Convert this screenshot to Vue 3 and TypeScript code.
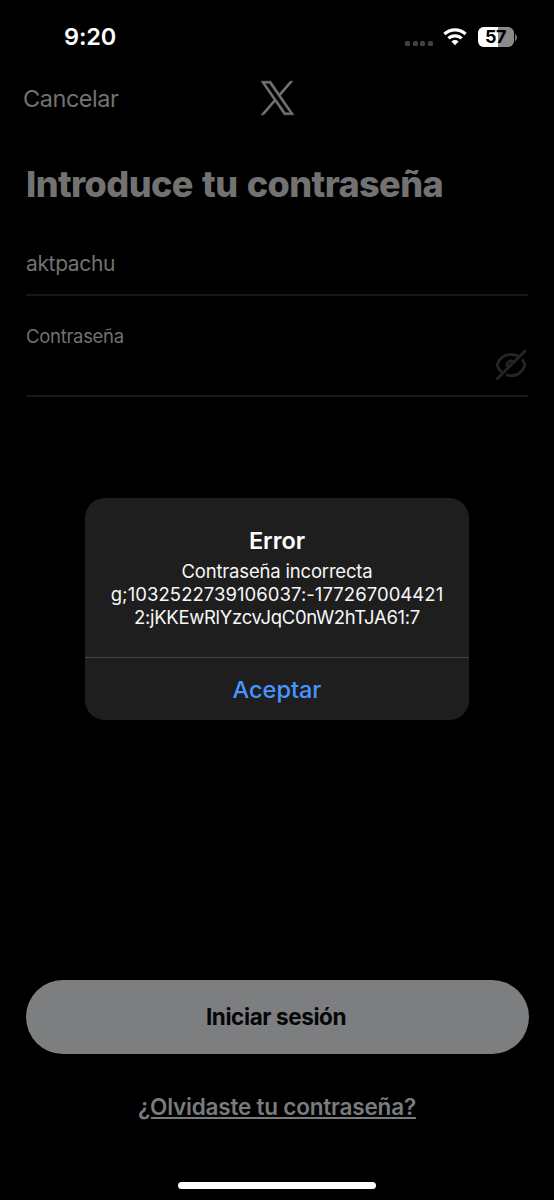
<script setup lang="ts">
import { ref } from 'vue'

const time = '9:20'
const battery = 57
const username = ref('aktpachu')
const message: string[] = [
  'Contraseña incorrecta',
  'g;1032522739106037:-177267004421',
  '2:jKKEwRlYzcvJqC0nW2hTJA61:7',
]
</script>

<template>
  <main class="screen">
    <header class="status">
      <span class="time">{{ time }}</span>
      <div class="indicators">
        <div class="dots"><i v-for="n in 4" :key="n" /></div>
        <svg class="wifi" viewBox="0 0 24 18">
          <path d="M12 .3C7.400 .3 3.200 2.100 .3 5l2.200 2.300C5 4.900 8.300 3.500 12 3.500s7 1.400 9.500 3.800L23.700 5C20.800 2.100 16.600 .3 12 .3z" />
          <path d="M12 6.200c-3 0-5.700 1.200-7.700 3.100l2.300 2.300C8 10.200 9.900 9.400 12 9.400s4 .8 5.400 2.200l2.300-2.300C17.700 7.400 15 6.200 12 6.200z" />
          <path d="M12 11.900c-1.400 0-2.700.6-3.600 1.500L12 17.300l3.600-3.900c-.9-.9-2.200-1.500-3.600-1.500z" />
        </svg>
        <div class="battery">
          <div class="cell">
            <div class="level" :style="{ width: battery + '%' }" />
            <span class="percent">{{ battery }}</span>
          </div>
          <svg class="nub" viewBox="0 0 2 7"><path d="M0 0C1.300.5 2 2 2 3.500S1.300 6.500 0 7z" /></svg>
        </div>
      </div>
    </header>

    <nav class="nav">
      <span class="cancel">Cancelar</span>
      <svg class="logo" viewBox="0 0 1200 1227">
        <path d="M714.163 519.284L1160.89 0H1055.03L667.137 450.887L357.328 0H0L468.492 681.821L0 1226.370H105.866L515.491 750.218L842.672 1226.370H1200L714.137 519.284H714.163ZM569.165 687.828L521.697 619.934L144.011 79.694H306.615L611.412 515.685L658.880 583.579L1055.080 1150.300H892.476L569.165 687.854V687.828Z" />
      </svg>
      <span />
    </nav>

    <section class="form">
      <h1>Introduce tu contraseña</h1>
      <div class="field user"><span>{{ username }}</span></div>
      <div class="field pass">
        <label>Contraseña</label>
        <svg class="eye" viewBox="0 0 32 32">
          <path d="M6.800 23C4.500 21 2.800 18.500 2 16 4.100 9.500 9.500 5.300 16 5.300c2.700 0 5.200.7 7.300 2M27 10.500c1.400 1.600 2.400 3.500 3 5.500-2.100 6.500-7.500 10.700-14 10.700-1.700 0-3.300-.3-4.800-.8" />
          <path d="M12.400 17.700c-1.100-3 1-5.700 3.600-5.700 1.100 0 2 .4 2.700 1" />
          <path d="M1.500 30.500L30.500 1.500" />
        </svg>
      </div>
    </section>

    <footer class="footer">
      <button class="login"><span>Iniciar sesión</span></button>
      <a class="forgot">¿Olvidaste tu contraseña?</a>
      <div class="home" />
    </footer>

    <div class="alert" role="alertdialog">
      <div class="body">
        <h2>Error</h2>
        <p v-for="(line, i) in message" :key="line" :class="'line' + i">{{ line }}</p>
      </div>
      <button class="accept">Aceptar</button>
    </div>
  </main>
</template>

<style>
html,
body {
  margin: 0;
  background: #000;
}
</style>

<style scoped>
.screen {
  position: relative;
  display: flex;
  flex-direction: column;
  width: 554px;
  height: 1200px;
  overflow: hidden;
  background: #000;
  color: #727272;
  font-family: Inter, "Liberation Sans", sans-serif;
}
.screen * {
  box-sizing: border-box;
}
span, label, p, a, h1, h2, button {
  white-space: nowrap;
}
.status {
  display: flex;
  justify-content: space-between;
  height: 74px;
  padding: 0 37px 0 64px;
}
.time {
  line-height: 74px;
  color: #fff;
  font-size: 23.500px;
  font-weight: 600;
  letter-spacing: -0.1px;
}
.indicators {
  display: flex;
  height: 74px;
  align-items: center;
}
.dots {
  display: flex;
  gap: 2.700px;
  margin: 12px 10px 0 0;
}
.dots i {
  width: 5px;
  height: 5px;
  border-radius: 1.500px;
  background: #414141;
}
.wifi {
  width: 24px;
  height: 18px;
  margin-right: 10.500px;
  fill: #fff;
}
.battery {
  display: flex;
  align-items: center;
  gap: 1.500px;
}
.cell {
  position: relative;
  width: 36px;
  height: 20px;
  overflow: hidden;
  border-radius: 6px;
  background: #8b8b8b;
}
.level {
  height: 100%;
  background: #fff;
}
.percent {
  position: absolute;
  inset: 0;
  color: #000;
  font-size: 18px;
  font-weight: 700;
  line-height: 20px;
  letter-spacing: -0.6px;
  text-align: center;
}
.nub {
  width: 2px;
  height: 7px;
  fill: #777;
}
.nav {
  display: grid;
  grid-template-columns: 1fr 33px 1fr;
  align-items: center;
  height: 48px;
  padding: 0 23px;
}
.cancel {
  font-size: 23.500px;
  letter-spacing: -0.45px;
}
.logo {
  width: 33px;
  height: 34px;
  overflow: visible;
  fill: #727272;
  stroke: #727272;
  stroke-width: 18;
}
.form {
  display: flex;
  flex-direction: column;
  padding: 0 26px;
}
h1 {
  height: 110px;
  margin: 0;
  padding-top: 39px;
  color: #727272;
  font-size: 36px;
  font-weight: 800;
  line-height: 46px;
  letter-spacing: -0.6px;
  word-spacing: 2px;
}
.field {
  border-bottom: 2px solid #161718;
}
.user {
  height: 64px;
  padding-top: 18px;
  font-size: 21px;
  line-height: 28px;
  letter-spacing: -0.350px;
}
.pass {
  display: flex;
  justify-content: space-between;
  height: 101px;
  padding-top: 28px;
  font-size: 18.500px;
  line-height: 24px;
  letter-spacing: -0.3px;
}
.eye {
  width: 32px;
  height: 32px;
  margin: 25px 1px 0 0;
  fill: none;
  stroke: #232527;
  stroke-width: 2.800;
}
.footer {
  display: flex;
  flex-direction: column;
  align-items: center;
  margin-top: auto;
  padding: 0 25px 11px;
}
button {
  border: 0;
  padding: 0;
  font-family: inherit;
}
.login {
  width: 503px;
  height: 74px;
  padding: 0 2px 1px 0;
  border-radius: 37px;
  background: #7d7e80;
  color: #050607;
  font-size: 22.500px;
  font-weight: 700;
  letter-spacing: -0.4px;
}
.forgot {
  height: 30px;
  margin-top: 38px;
  color: #7a7b7d;
  font-size: 22.500px;
  font-weight: 600;
  line-height: 30px;
  letter-spacing: -0.2px;
  text-decoration: underline;
  text-decoration-thickness: 2px;
  text-underline-offset: 2px;
}
.home {
  width: 198px;
  height: 7px;
  margin-top: 60px;
  border-radius: 4px;
  background: #fff;
}
.alert {
  position: absolute;
  top: 498px;
  left: 85px;
  display: flex;
  flex-direction: column;
  width: 384px;
  height: 222px;
  border-radius: 20px;
  background: #1e1e1e;
  color: #f7f7f7;
  text-align: center;
}
.body {
  display: flex;
  flex-direction: column;
  align-items: center;
  height: 160px;
  padding-top: 28px;
  border-bottom: 1px solid #444;
}
h2 {
  margin: 0;
  color: #fff;
  font-size: 23.500px;
  font-weight: 600;
  line-height: 30px;
}
p {
  margin: 0;
  font-size: 18.500px;
  line-height: 23px;
}
.body h2 + p {
  margin-top: 4px;
}
.line0 {
  letter-spacing: -0.180px;
}
.line1 {
  letter-spacing: 0.050px;
}
.line2 {
  letter-spacing: -0.320px;
}
.accept {
  flex: 1;
  background: none;
  color: #4795ff;
  font-size: 23.500px;
  font-weight: 500;
}
</style>
